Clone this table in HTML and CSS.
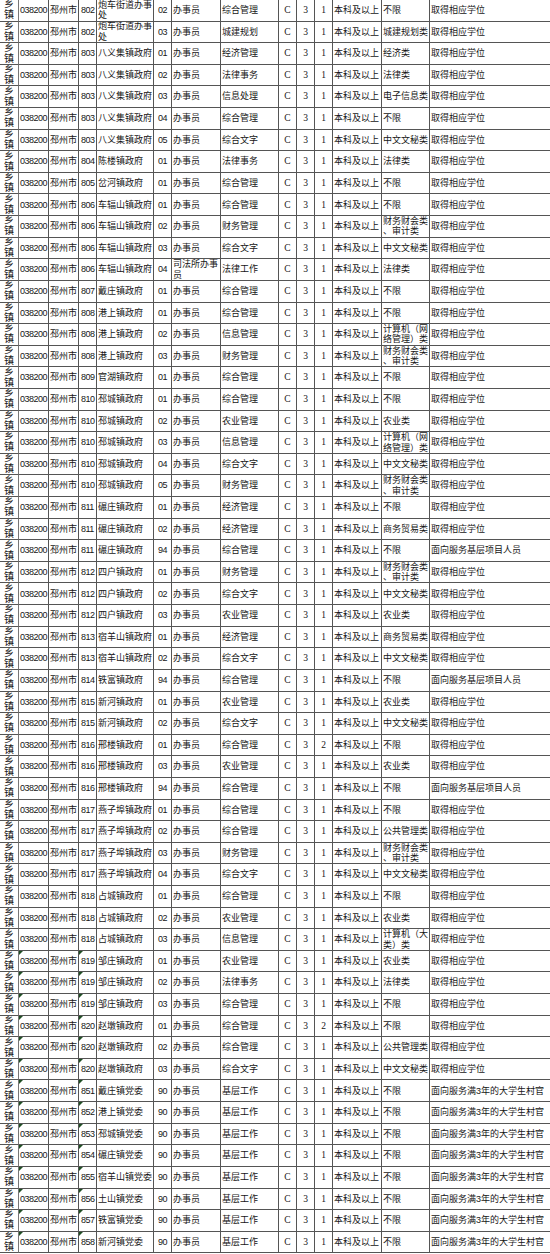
FILE: index.html
```html
<!DOCTYPE html>
<html lang="zh-CN">
<head>
<meta charset="utf-8">
<title>邳州市乡镇职位表</title>
<link rel="stylesheet" href="styles.css">
</head>
<body>
<div class="sheet">
<div class="row"><span>乡<br>镇</span><span>038200</span><span>邳州市</span><span>802</span><span>炮车街道办事<br>处</span><span>02</span><span>办事员</span><span>综合管理</span><span>C</span><span>3</span><span>1</span><span>本科及以上</span><span>不限</span><span>取得相应学位</span></div>
<div class="row"><span>乡<br>镇</span><span>038200</span><span>邳州市</span><span>802</span><span>炮车街道办事<br>处</span><span>03</span><span>办事员</span><span>城建规划</span><span>C</span><span>3</span><span>1</span><span>本科及以上</span><span>城建规划类</span><span>取得相应学位</span></div>
<div class="row"><span>乡<br>镇</span><span>038200</span><span>邳州市</span><span>803</span><span>八义集镇政府</span><span>01</span><span>办事员</span><span>经济管理</span><span>C</span><span>3</span><span>1</span><span>本科及以上</span><span>经济类</span><span>取得相应学位</span></div>
<div class="row"><span>乡<br>镇</span><span>038200</span><span>邳州市</span><span>803</span><span>八义集镇政府</span><span>02</span><span>办事员</span><span>法律事务</span><span>C</span><span>3</span><span>1</span><span>本科及以上</span><span>法律类</span><span>取得相应学位</span></div>
<div class="row"><span>乡<br>镇</span><span>038200</span><span>邳州市</span><span>803</span><span>八义集镇政府</span><span>03</span><span>办事员</span><span>信息处理</span><span>C</span><span>3</span><span>1</span><span>本科及以上</span><span>电子信息类</span><span>取得相应学位</span></div>
<div class="row"><span>乡<br>镇</span><span>038200</span><span>邳州市</span><span>803</span><span>八义集镇政府</span><span>04</span><span>办事员</span><span>综合管理</span><span>C</span><span>3</span><span>1</span><span>本科及以上</span><span>不限</span><span>取得相应学位</span></div>
<div class="row"><span>乡<br>镇</span><span>038200</span><span>邳州市</span><span>803</span><span>八义集镇政府</span><span>05</span><span>办事员</span><span>综合文字</span><span>C</span><span>3</span><span>1</span><span>本科及以上</span><span>中文文秘类</span><span>取得相应学位</span></div>
<div class="row"><span>乡<br>镇</span><span>038200</span><span>邳州市</span><span>804</span><span>陈楼镇政府</span><span>01</span><span>办事员</span><span>法律事务</span><span>C</span><span>3</span><span>1</span><span>本科及以上</span><span>法律类</span><span>取得相应学位</span></div>
<div class="row"><span>乡<br>镇</span><span>038200</span><span>邳州市</span><span>805</span><span>岔河镇政府</span><span>01</span><span>办事员</span><span>综合管理</span><span>C</span><span>3</span><span>1</span><span>本科及以上</span><span>不限</span><span>取得相应学位</span></div>
<div class="row"><span>乡<br>镇</span><span>038200</span><span>邳州市</span><span>806</span><span>车辐山镇政府</span><span>01</span><span>办事员</span><span>综合管理</span><span>C</span><span>3</span><span>1</span><span>本科及以上</span><span>不限</span><span>取得相应学位</span></div>
<div class="row"><span>乡<br>镇</span><span>038200</span><span>邳州市</span><span>806</span><span>车辐山镇政府</span><span>02</span><span>办事员</span><span>财务管理</span><span>C</span><span>3</span><span>1</span><span>本科及以上</span><span>财务财会类<br>、审计类</span><span>取得相应学位</span></div>
<div class="row"><span>乡<br>镇</span><span>038200</span><span>邳州市</span><span>806</span><span>车辐山镇政府</span><span>03</span><span>办事员</span><span>综合文字</span><span>C</span><span>3</span><span>1</span><span>本科及以上</span><span>中文文秘类</span><span>取得相应学位</span></div>
<div class="row"><span>乡<br>镇</span><span>038200</span><span>邳州市</span><span>806</span><span>车辐山镇政府</span><span>04</span><span>司法所办事<br>员</span><span>法律工作</span><span>C</span><span>3</span><span>1</span><span>本科及以上</span><span>法律类</span><span>取得相应学位</span></div>
<div class="row"><span>乡<br>镇</span><span>038200</span><span>邳州市</span><span>807</span><span>戴庄镇政府</span><span>01</span><span>办事员</span><span>综合管理</span><span>C</span><span>3</span><span>1</span><span>本科及以上</span><span>不限</span><span>取得相应学位</span></div>
<div class="row"><span>乡<br>镇</span><span>038200</span><span>邳州市</span><span>808</span><span>港上镇政府</span><span>01</span><span>办事员</span><span>综合管理</span><span>C</span><span>3</span><span>1</span><span>本科及以上</span><span>不限</span><span>取得相应学位</span></div>
<div class="row"><span>乡<br>镇</span><span>038200</span><span>邳州市</span><span>808</span><span>港上镇政府</span><span>02</span><span>办事员</span><span>信息管理</span><span>C</span><span>3</span><span>1</span><span>本科及以上</span><span>计算机（网<br>络管理）类</span><span>取得相应学位</span></div>
<div class="row"><span>乡<br>镇</span><span>038200</span><span>邳州市</span><span>808</span><span>港上镇政府</span><span>03</span><span>办事员</span><span>财务管理</span><span>C</span><span>3</span><span>1</span><span>本科及以上</span><span>财务财会类<br>、审计类</span><span>取得相应学位</span></div>
<div class="row"><span>乡<br>镇</span><span>038200</span><span>邳州市</span><span>809</span><span>官湖镇政府</span><span>01</span><span>办事员</span><span>综合管理</span><span>C</span><span>3</span><span>1</span><span>本科及以上</span><span>不限</span><span>取得相应学位</span></div>
<div class="row"><span>乡<br>镇</span><span>038200</span><span>邳州市</span><span>810</span><span>邳城镇政府</span><span>01</span><span>办事员</span><span>综合管理</span><span>C</span><span>3</span><span>1</span><span>本科及以上</span><span>不限</span><span>取得相应学位</span></div>
<div class="row"><span>乡<br>镇</span><span>038200</span><span>邳州市</span><span>810</span><span>邳城镇政府</span><span>02</span><span>办事员</span><span>农业管理</span><span>C</span><span>3</span><span>1</span><span>本科及以上</span><span>农业类</span><span>取得相应学位</span></div>
<div class="row"><span>乡<br>镇</span><span>038200</span><span>邳州市</span><span>810</span><span>邳城镇政府</span><span>03</span><span>办事员</span><span>信息管理</span><span>C</span><span>3</span><span>1</span><span>本科及以上</span><span>计算机（网<br>络管理）类</span><span>取得相应学位</span></div>
<div class="row"><span>乡<br>镇</span><span>038200</span><span>邳州市</span><span>810</span><span>邳城镇政府</span><span>04</span><span>办事员</span><span>综合文字</span><span>C</span><span>3</span><span>1</span><span>本科及以上</span><span>中文文秘类</span><span>取得相应学位</span></div>
<div class="row"><span>乡<br>镇</span><span>038200</span><span>邳州市</span><span>810</span><span>邳城镇政府</span><span>05</span><span>办事员</span><span>财务管理</span><span>C</span><span>3</span><span>1</span><span>本科及以上</span><span>财务财会类<br>、审计类</span><span>取得相应学位</span></div>
<div class="row"><span>乡<br>镇</span><span>038200</span><span>邳州市</span><span>811</span><span>碾庄镇政府</span><span>01</span><span>办事员</span><span>经济管理</span><span>C</span><span>3</span><span>1</span><span>本科及以上</span><span>不限</span><span>取得相应学位</span></div>
<div class="row"><span>乡<br>镇</span><span>038200</span><span>邳州市</span><span>811</span><span>碾庄镇政府</span><span>02</span><span>办事员</span><span>经济管理</span><span>C</span><span>3</span><span>1</span><span>本科及以上</span><span>商务贸易类</span><span>取得相应学位</span></div>
<div class="row"><span>乡<br>镇</span><span>038200</span><span>邳州市</span><span>811</span><span>碾庄镇政府</span><span>94</span><span>办事员</span><span>综合管理</span><span>C</span><span>3</span><span>1</span><span>本科及以上</span><span>不限</span><span>面向服务基层项目人员</span></div>
<div class="row"><span>乡<br>镇</span><span>038200</span><span>邳州市</span><span>812</span><span>四户镇政府</span><span>01</span><span>办事员</span><span>财务管理</span><span>C</span><span>3</span><span>1</span><span>本科及以上</span><span>财务财会类<br>、审计类</span><span>取得相应学位</span></div>
<div class="row"><span>乡<br>镇</span><span>038200</span><span>邳州市</span><span>812</span><span>四户镇政府</span><span>02</span><span>办事员</span><span>综合文字</span><span>C</span><span>3</span><span>1</span><span>本科及以上</span><span>中文文秘类</span><span>取得相应学位</span></div>
<div class="row"><span>乡<br>镇</span><span>038200</span><span>邳州市</span><span>812</span><span>四户镇政府</span><span>03</span><span>办事员</span><span>农业管理</span><span>C</span><span>3</span><span>1</span><span>本科及以上</span><span>农业类</span><span>取得相应学位</span></div>
<div class="row"><span>乡<br>镇</span><span>038200</span><span>邳州市</span><span>813</span><span>宿羊山镇政府</span><span>01</span><span>办事员</span><span>经济管理</span><span>C</span><span>3</span><span>1</span><span>本科及以上</span><span>商务贸易类</span><span>取得相应学位</span></div>
<div class="row"><span>乡<br>镇</span><span>038200</span><span>邳州市</span><span>813</span><span>宿羊山镇政府</span><span>02</span><span>办事员</span><span>综合文字</span><span>C</span><span>3</span><span>1</span><span>本科及以上</span><span>中文文秘类</span><span>取得相应学位</span></div>
<div class="row"><span>乡<br>镇</span><span>038200</span><span>邳州市</span><span>814</span><span>铁富镇政府</span><span>94</span><span>办事员</span><span>综合管理</span><span>C</span><span>3</span><span>1</span><span>本科及以上</span><span>不限</span><span>面向服务基层项目人员</span></div>
<div class="row"><span>乡<br>镇</span><span>038200</span><span>邳州市</span><span>815</span><span>新河镇政府</span><span>01</span><span>办事员</span><span>农业管理</span><span>C</span><span>3</span><span>1</span><span>本科及以上</span><span>农业类</span><span>取得相应学位</span></div>
<div class="row"><span>乡<br>镇</span><span>038200</span><span>邳州市</span><span>815</span><span>新河镇政府</span><span>02</span><span>办事员</span><span>综合文字</span><span>C</span><span>3</span><span>1</span><span>本科及以上</span><span>中文文秘类</span><span>取得相应学位</span></div>
<div class="row"><span>乡<br>镇</span><span>038200</span><span>邳州市</span><span>816</span><span>邢楼镇政府</span><span>01</span><span>办事员</span><span>综合管理</span><span>C</span><span>3</span><span>2</span><span>本科及以上</span><span>不限</span><span>取得相应学位</span></div>
<div class="row"><span>乡<br>镇</span><span>038200</span><span>邳州市</span><span>816</span><span>邢楼镇政府</span><span>03</span><span>办事员</span><span>农业管理</span><span>C</span><span>3</span><span>1</span><span>本科及以上</span><span>农业类</span><span>取得相应学位</span></div>
<div class="row"><span>乡<br>镇</span><span>038200</span><span>邳州市</span><span>816</span><span>邢楼镇政府</span><span>94</span><span>办事员</span><span>综合管理</span><span>C</span><span>3</span><span>1</span><span>本科及以上</span><span>不限</span><span>面向服务基层项目人员</span></div>
<div class="row"><span>乡<br>镇</span><span>038200</span><span>邳州市</span><span>817</span><span>燕子埠镇政府</span><span>01</span><span>办事员</span><span>综合管理</span><span>C</span><span>3</span><span>1</span><span>本科及以上</span><span>不限</span><span>取得相应学位</span></div>
<div class="row"><span>乡<br>镇</span><span>038200</span><span>邳州市</span><span>817</span><span>燕子埠镇政府</span><span>02</span><span>办事员</span><span>综合管理</span><span>C</span><span>3</span><span>1</span><span>本科及以上</span><span>公共管理类</span><span>取得相应学位</span></div>
<div class="row"><span>乡<br>镇</span><span>038200</span><span>邳州市</span><span>817</span><span>燕子埠镇政府</span><span>03</span><span>办事员</span><span>财务管理</span><span>C</span><span>3</span><span>1</span><span>本科及以上</span><span>财务财会类<br>、审计类</span><span>取得相应学位</span></div>
<div class="row"><span>乡<br>镇</span><span>038200</span><span>邳州市</span><span>817</span><span>燕子埠镇政府</span><span>04</span><span>办事员</span><span>综合文字</span><span>C</span><span>3</span><span>1</span><span>本科及以上</span><span>中文文秘类</span><span>取得相应学位</span></div>
<div class="row"><span>乡<br>镇</span><span>038200</span><span>邳州市</span><span>818</span><span>占城镇政府</span><span>01</span><span>办事员</span><span>综合管理</span><span>C</span><span>3</span><span>1</span><span>本科及以上</span><span>不限</span><span>取得相应学位</span></div>
<div class="row"><span>乡<br>镇</span><span>038200</span><span>邳州市</span><span>818</span><span>占城镇政府</span><span>02</span><span>办事员</span><span>农业管理</span><span>C</span><span>3</span><span>1</span><span>本科及以上</span><span>农业类</span><span>取得相应学位</span></div>
<div class="row"><span>乡<br>镇</span><span>038200</span><span>邳州市</span><span>818</span><span>占城镇政府</span><span>03</span><span>办事员</span><span>信息管理</span><span>C</span><span>3</span><span>1</span><span>本科及以上</span><span>计算机（大<br>类）类</span><span>取得相应学位</span></div>
<div class="row m"><span>乡<br>镇</span><span>038200</span><span>邳州市</span><span>819</span><span>邹庄镇政府</span><span>01</span><span>办事员</span><span>农业管理</span><span>C</span><span>3</span><span>1</span><span>本科及以上</span><span>农业类</span><span>取得相应学位</span></div>
<div class="row m"><span>乡<br>镇</span><span>038200</span><span>邳州市</span><span>819</span><span>邹庄镇政府</span><span>02</span><span>办事员</span><span>法律事务</span><span>C</span><span>3</span><span>1</span><span>本科及以上</span><span>法律类</span><span>取得相应学位</span></div>
<div class="row m"><span>乡<br>镇</span><span>038200</span><span>邳州市</span><span>819</span><span>邹庄镇政府</span><span>03</span><span>办事员</span><span>综合管理</span><span>C</span><span>3</span><span>1</span><span>本科及以上</span><span>不限</span><span>取得相应学位</span></div>
<div class="row m"><span>乡<br>镇</span><span>038200</span><span>邳州市</span><span>820</span><span>赵墩镇政府</span><span>01</span><span>办事员</span><span>综合管理</span><span>C</span><span>3</span><span>2</span><span>本科及以上</span><span>不限</span><span>取得相应学位</span></div>
<div class="row m"><span>乡<br>镇</span><span>038200</span><span>邳州市</span><span>820</span><span>赵墩镇政府</span><span>02</span><span>办事员</span><span>综合管理</span><span>C</span><span>3</span><span>1</span><span>本科及以上</span><span>公共管理类</span><span>取得相应学位</span></div>
<div class="row m"><span>乡<br>镇</span><span>038200</span><span>邳州市</span><span>820</span><span>赵墩镇政府</span><span>03</span><span>办事员</span><span>综合文字</span><span>C</span><span>3</span><span>1</span><span>本科及以上</span><span>中文文秘类</span><span>取得相应学位</span></div>
<div class="row m"><span>乡<br>镇</span><span>038200</span><span>邳州市</span><span>851</span><span>戴庄镇党委</span><span>90</span><span>办事员</span><span>基层工作</span><span>C</span><span>3</span><span>1</span><span>本科及以上</span><span>不限</span><span>面向服务满3年的大学生村官</span></div>
<div class="row m"><span>乡<br>镇</span><span>038200</span><span>邳州市</span><span>852</span><span>港上镇党委</span><span>90</span><span>办事员</span><span>基层工作</span><span>C</span><span>3</span><span>1</span><span>本科及以上</span><span>不限</span><span>面向服务满3年的大学生村官</span></div>
<div class="row m"><span>乡<br>镇</span><span>038200</span><span>邳州市</span><span>853</span><span>邳城镇党委</span><span>90</span><span>办事员</span><span>基层工作</span><span>C</span><span>3</span><span>1</span><span>本科及以上</span><span>不限</span><span>面向服务满3年的大学生村官</span></div>
<div class="row m"><span>乡<br>镇</span><span>038200</span><span>邳州市</span><span>854</span><span>碾庄镇党委</span><span>90</span><span>办事员</span><span>基层工作</span><span>C</span><span>3</span><span>1</span><span>本科及以上</span><span>不限</span><span>面向服务满3年的大学生村官</span></div>
<div class="row m"><span>乡<br>镇</span><span>038200</span><span>邳州市</span><span>855</span><span>宿羊山镇党委</span><span>90</span><span>办事员</span><span>基层工作</span><span>C</span><span>3</span><span>1</span><span>本科及以上</span><span>不限</span><span>面向服务满3年的大学生村官</span></div>
<div class="row m"><span>乡<br>镇</span><span>038200</span><span>邳州市</span><span>856</span><span>土山镇党委</span><span>90</span><span>办事员</span><span>基层工作</span><span>C</span><span>3</span><span>1</span><span>本科及以上</span><span>不限</span><span>面向服务满3年的大学生村官</span></div>
<div class="row m"><span>乡<br>镇</span><span>038200</span><span>邳州市</span><span>857</span><span>铁富镇党委</span><span>90</span><span>办事员</span><span>基层工作</span><span>C</span><span>3</span><span>1</span><span>本科及以上</span><span>不限</span><span>面向服务满3年的大学生村官</span></div>
<div class="row m"><span>乡<br>镇</span><span>038200</span><span>邳州市</span><span>858</span><span>新河镇党委</span><span>90</span><span>办事员</span><span>基层工作</span><span>C</span><span>3</span><span>1</span><span>本科及以上</span><span>不限</span><span>面向服务满3年的大学生村官</span></div>
</div>
</body>
</html>
```
FILE: styles.css
```css
html, body {
  margin: 0;
  padding: 0;
  background: #ffffff;
}

.sheet {
  width: 550px;
  font-family: "Liberation Sans", "Noto Sans CJK SC", sans-serif;
  font-size: 9px;
  color: #161616;
}

.row {
  display: grid;
  grid-template-columns: 19px 30px 30px 18px 57px 18px 49px 58px 18px 18px 18px 49px 48px 120px;
  height: 21.6207px;
}

.row > span {
  position: relative;
  display: flex;
  align-items: center;
  box-sizing: border-box;
  padding: 0 0 0 1px;
  border-right: 1px solid #555555;
  border-bottom: 1px solid #555555;
  overflow: hidden;
  white-space: nowrap;
  line-height: 10.5px;
}

/* 乡镇 column: stacked characters */
.row > span:nth-child(1) {
  justify-content: center;
  padding: 0;
  font-size: 10px;
  line-height: 10px;
  text-align: center;
  border-right-color: #777777;
}

/* code columns */
.row > span:nth-child(2),
.row > span:nth-child(4),
.row > span:nth-child(6) {
  letter-spacing: -0.5px;
}

.row > span:nth-child(4) {
  padding-left: 2px;
}

.row > span:nth-child(6) {
  justify-content: center;
  padding: 0;
}

/* C / 3 / 1 columns */
.row > span:nth-child(9),
.row > span:nth-child(10),
.row > span:nth-child(11) {
  justify-content: center;
  padding: 0;
  font-family: "Liberation Serif", "Noto Sans CJK SC", serif;
  font-size: 9.5px;
}

.row > span:nth-child(14) {
  border-right: none;
}

/* Excel "number stored as text" markers */
.m > span:nth-child(2)::before,
.m > span:nth-child(4)::before {
  content: "";
  position: absolute;
  left: 0;
  top: 0;
  border-top: 4px solid #1f4f24;
  border-right: 4px solid transparent;
}
```
